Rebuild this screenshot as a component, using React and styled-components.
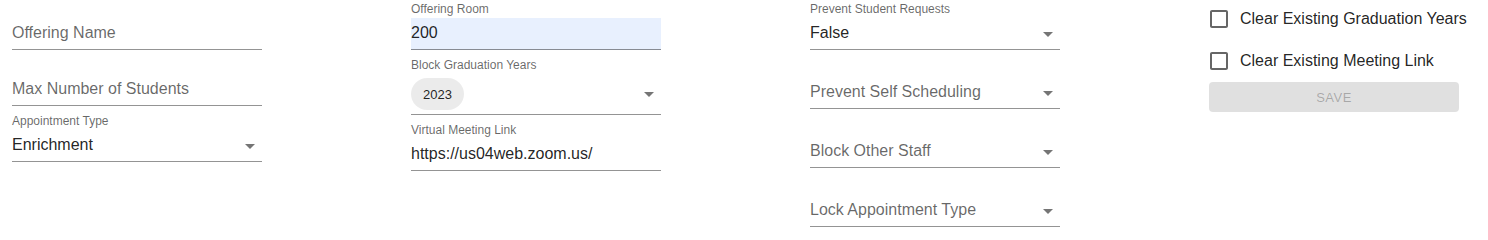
import React from "react";
import styled, { createGlobalStyle } from "styled-components";

const GlobalStyle = createGlobalStyle`
  html, body {
    margin: 0;
    padding: 0;
    background: #ffffff;
  }
  body {
    font-family: "Liberation Sans", Arial, Helvetica, sans-serif;
    color: rgba(0, 0, 0, 0.87);
  }
`;

const Page = styled.div`
  display: flex;
  align-items: flex-start;
  gap: 149px;
  padding: 2px 0 0 12px;
  width: 1488px;
  height: 232px;
  box-sizing: border-box;
  overflow: hidden;
`;

const Column = styled.div`
  display: flex;
  flex-direction: column;
  width: 250px;
  gap: ${(p) => p.$gap ?? 8}px;
  margin-top: ${(p) => p.$offset ?? 0}px;
`;

const Field = styled.div`
  display: flex;
  flex-direction: column;
  width: 100%;
`;

const Label = styled.div`
  height: 16px;
  font-size: 12px;
  line-height: 14px;
  color: rgba(0, 0, 0, 0.6);
  white-space: nowrap;
`;

const InputBox = styled.div`
  display: flex;
  align-items: ${(p) => (p.$chips ? "center" : "flex-start")};
  justify-content: space-between;
  box-sizing: border-box;
  height: ${(p) => (p.$chips ? "41px" : "32px")};
  padding: ${(p) => (p.$chips ? "4px 0 4px" : "3px 0 5px")};
  border-bottom: 1px solid rgba(0, 0, 0, 0.42);
  background: ${(p) => (p.$autofill ? "#e8f0fe" : "transparent")};
  font-size: 16px;
  line-height: 23px;
  color: ${(p) => (p.$placeholder ? "rgba(0, 0, 0, 0.6)" : "rgba(0, 0, 0, 0.87)")};
  white-space: nowrap;
`;

const Chip = styled.span`
  display: inline-flex;
  align-items: center;
  height: 32px;
  padding: 0 12px;
  border-radius: 16px;
  background: rgba(0, 0, 0, 0.08);
  font-size: 13px;
  color: rgba(0, 0, 0, 0.87);
`;

const ArrowIcon = styled.svg`
  width: 24px;
  height: 24px;
  flex: none;
  fill: rgba(0, 0, 0, 0.54);
  margin: ${(p) => (p.$chips ? "0" : "1px 0 -2px")};
`;

const CheckList = styled.div`
  display: flex;
  flex-direction: column;
`;

const CheckRow = styled.label`
  display: flex;
  align-items: center;
  height: 42px;
  margin-left: -11px;
  font-size: 16px;
  line-height: 24px;
  color: rgba(0, 0, 0, 0.87);
  white-space: nowrap;
`;

const CheckBoxWrap = styled.span`
  display: inline-flex;
  padding: 9px;
`;

const CheckIcon = styled.svg`
  width: 24px;
  height: 24px;
  fill: rgba(0, 0, 0, 0.6);
`;

const SaveButton = styled.button`
  width: 250px;
  height: 30px;
  border: none;
  border-radius: 4px;
  background: rgba(0, 0, 0, 0.12);
  color: rgba(0, 0, 0, 0.26);
  font-family: inherit;
  font-size: 13px;
  font-weight: 500;
  letter-spacing: 0.46px;
  text-transform: uppercase;
  cursor: default;
`;

const Arrow = ({ chips }) => (
  <ArrowIcon viewBox="0 0 24 24" $chips={chips}>
    <path d="M7 10l5 5 5-5z" />
  </ArrowIcon>
);

const TextField = ({ label, value, autofill }) => (
  <Field>
    <Label>{value ? label : ""}</Label>
    <InputBox $placeholder={!value} $autofill={autofill}>
      {value || label}
    </InputBox>
  </Field>
);

const SelectField = ({ label, value }) => (
  <Field>
    <Label>{value ? label : ""}</Label>
    <InputBox $placeholder={!value}>
      <span>{value || label}</span>
      <Arrow />
    </InputBox>
  </Field>
);

const ChipSelectField = ({ label, chips }) => (
  <Field>
    <Label>{label}</Label>
    <InputBox $chips>
      <span>
        {chips.map((c) => (
          <Chip key={c}>{c}</Chip>
        ))}
      </span>
      <Arrow chips />
    </InputBox>
  </Field>
);

const Check = ({ label }) => (
  <CheckRow>
    <CheckBoxWrap>
      <CheckIcon viewBox="0 0 24 24">
        <path d="M19 5v14H5V5h14m0-2H5c-1.11 0-2 .9-2 2v14c0 1.1.89 2 2 2h14c1.1 0 2-.9 2-2V5c0-1.1-.9-2-2-2z" />
      </CheckIcon>
    </CheckBoxWrap>
    {label}
  </CheckRow>
);

export default function App() {
  return (
    <>
      <GlobalStyle />
      <Page>
        <Column>
          <TextField label="Offering Name" />
          <TextField label="Max Number of Students" />
          <SelectField label="Appointment Type" value="Enrichment" />
        </Column>
        <Column>
          <TextField label="Offering Room" value="200" autofill />
          <ChipSelectField label="Block Graduation Years" chips={["2023"]} />
          <TextField label="Virtual Meeting Link" value="https://us04web.zoom.us/" />
        </Column>
        <Column $gap={11}>
          <SelectField label="Prevent Student Requests" value="False" />
          <SelectField label="Prevent Self Scheduling" />
          <SelectField label="Block Other Staff" />
          <SelectField label="Lock Appointment Type" />
        </Column>
        <Column $gap={0} $offset={-4}>
          <CheckList>
            <Check label="Clear Existing Graduation Years" />
            <Check label="Clear Existing Meeting Link" />
          </CheckList>
          <SaveButton disabled>Save</SaveButton>
        </Column>
      </Page>
    </>
  );
}
